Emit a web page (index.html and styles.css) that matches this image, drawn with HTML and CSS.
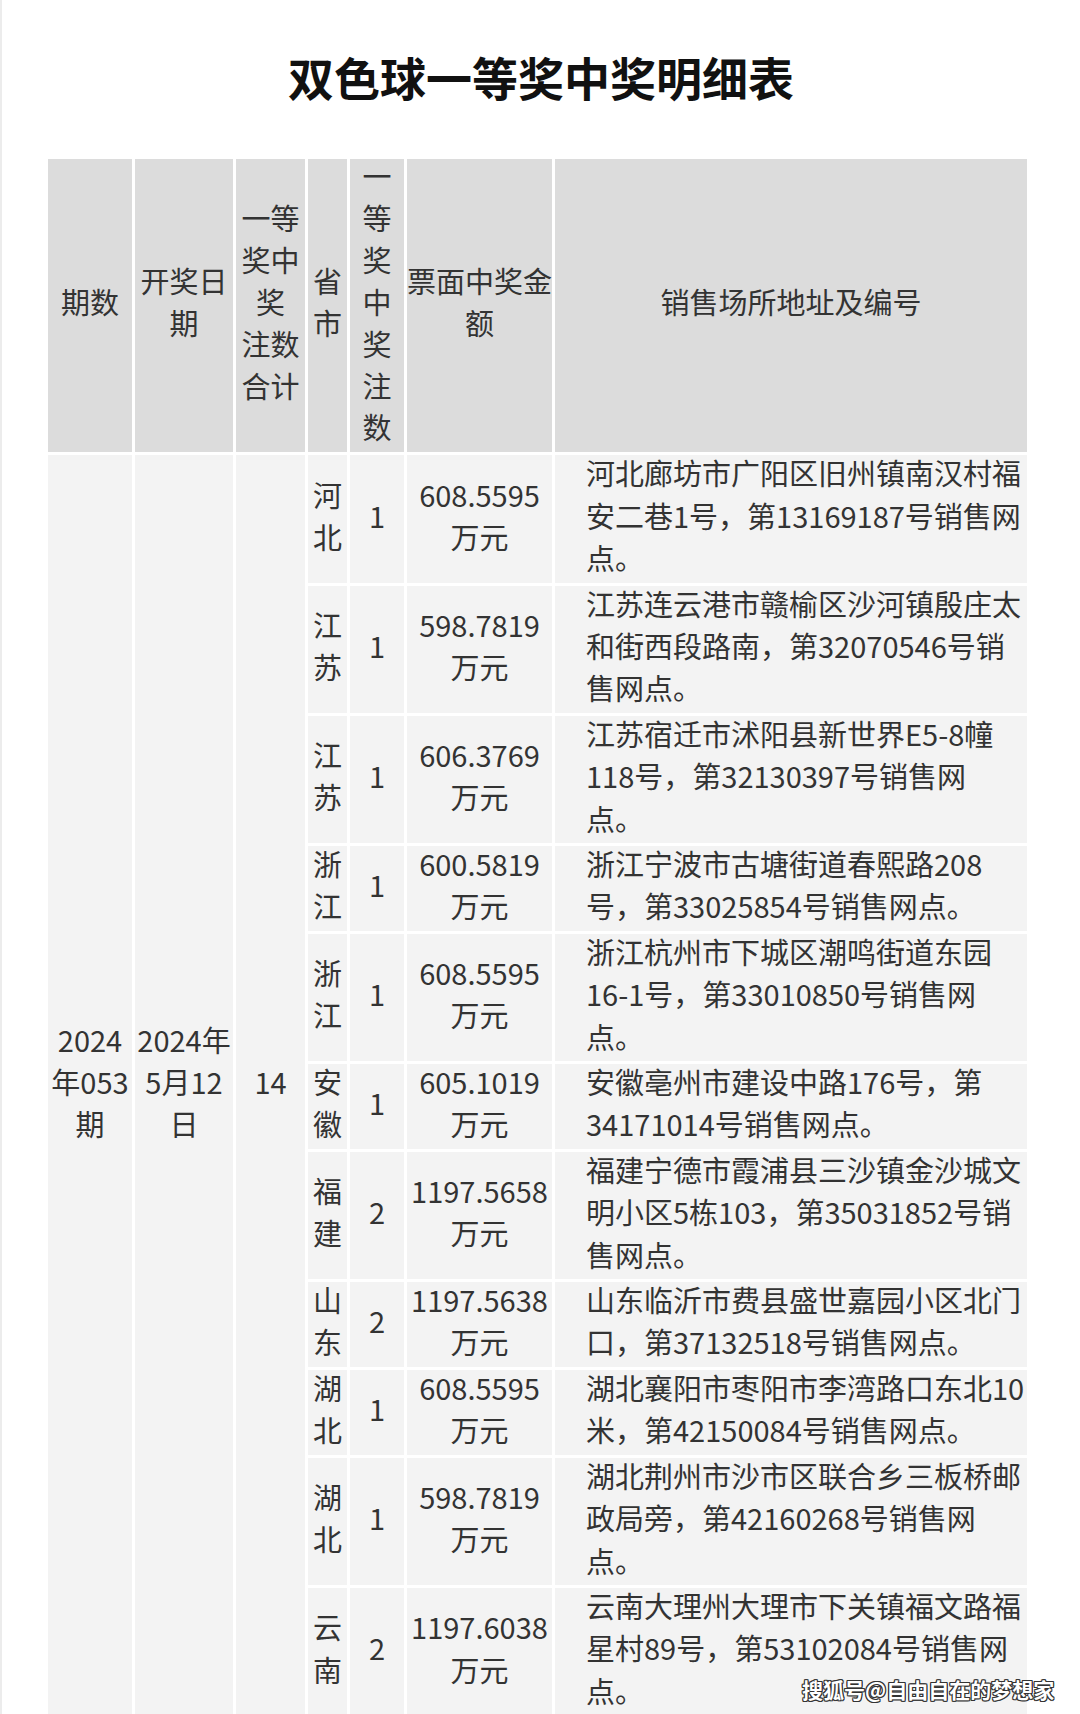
FILE: index.html
```html
<!DOCTYPE html>
<html lang="zh-CN">
<head>
<meta charset="utf-8">
<title>双色球一等奖中奖明细表</title>
<link rel="stylesheet" href="styles.css">
</head>
<body>
<div class="page">
  <h1 class="title">双色球一等奖中奖明细表</h1>
  <table class="prize">
    <colgroup>
      <col class="c1"><col class="c2"><col class="c3"><col class="c4"><col class="c5"><col class="c6"><col class="c7">
    </colgroup>
    <thead>
      <tr>
        <th><div class="t">期数</div></th>
        <th><div class="t">开奖日<br>期</div></th>
        <th><div class="t">一等<br>奖中<br>奖<br>注数<br>合计</div></th>
        <th><div class="t">省<br>市</div></th>
        <th><div class="t">一<br>等<br>奖<br>中<br>奖<br>注<br>数</div></th>
        <th><div class="t">票面中奖金<br>额</div></th>
        <th><div class="t">销售场所地址及编号</div></th>
      </tr>
    </thead>
    <tbody>
      <tr>
        <td rowspan="11"><div class="t">2024<br>年053<br>期</div></td>
        <td rowspan="11"><div class="t">2024年<br>5月12<br>日</div></td>
        <td rowspan="11"><div class="t">14</div></td>
        <td><div class="t">河<br>北</div></td><td><div class="t">1</div></td><td><div class="t">608.5595<br>万元</div></td>
        <td class="addr"><div class="t">河北廊坊市广阳区旧州镇南汉村福<br>安二巷1号，第13169187号销售网<br>点。</div></td>
      </tr>
      <tr>
        <td><div class="t">江<br>苏</div></td><td><div class="t">1</div></td><td><div class="t">598.7819<br>万元</div></td>
        <td class="addr"><div class="t">江苏连云港市赣榆区沙河镇殷庄太<br>和街西段路南，第32070546号销<br>售网点。</div></td>
      </tr>
      <tr>
        <td><div class="t">江<br>苏</div></td><td><div class="t">1</div></td><td><div class="t">606.3769<br>万元</div></td>
        <td class="addr"><div class="t">江苏宿迁市沭阳县新世界E5-8幢<br>118号，第32130397号销售网<br>点。</div></td>
      </tr>
      <tr>
        <td><div class="t">浙<br>江</div></td><td><div class="t">1</div></td><td><div class="t">600.5819<br>万元</div></td>
        <td class="addr"><div class="t">浙江宁波市古塘街道春熙路208<br>号，第33025854号销售网点。</div></td>
      </tr>
      <tr>
        <td><div class="t">浙<br>江</div></td><td><div class="t">1</div></td><td><div class="t">608.5595<br>万元</div></td>
        <td class="addr"><div class="t">浙江杭州市下城区潮鸣街道东园<br>16-1号，第33010850号销售网<br>点。</div></td>
      </tr>
      <tr>
        <td><div class="t">安<br>徽</div></td><td><div class="t">1</div></td><td><div class="t">605.1019<br>万元</div></td>
        <td class="addr"><div class="t">安徽亳州市建设中路176号，第<br>34171014号销售网点。</div></td>
      </tr>
      <tr>
        <td><div class="t">福<br>建</div></td><td><div class="t">2</div></td><td><div class="t">1197.5658<br>万元</div></td>
        <td class="addr"><div class="t">福建宁德市霞浦县三沙镇金沙城文<br>明小区5栋103，第35031852号销<br>售网点。</div></td>
      </tr>
      <tr>
        <td><div class="t">山<br>东</div></td><td><div class="t">2</div></td><td><div class="t">1197.5638<br>万元</div></td>
        <td class="addr"><div class="t">山东临沂市费县盛世嘉园小区北门<br>口，第37132518号销售网点。</div></td>
      </tr>
      <tr>
        <td><div class="t">湖<br>北</div></td><td><div class="t">1</div></td><td><div class="t">608.5595<br>万元</div></td>
        <td class="addr"><div class="t">湖北襄阳市枣阳市李湾路口东北10<br>米，第42150084号销售网点。</div></td>
      </tr>
      <tr>
        <td><div class="t">湖<br>北</div></td><td><div class="t">1</div></td><td><div class="t">598.7819<br>万元</div></td>
        <td class="addr"><div class="t">湖北荆州市沙市区联合乡三板桥邮<br>政局旁，第42160268号销售网<br>点。</div></td>
      </tr>
      <tr>
        <td><div class="t">云<br>南</div></td><td><div class="t">2</div></td><td><div class="t">1197.6038<br>万元</div></td>
        <td class="addr"><div class="t">云南大理州大理市下关镇福文路福<br>星村89号，第53102084号销售网<br>点。</div></td>
      </tr>
    </tbody>
  </table>
  <div class="watermark">搜狐号@自由自在的梦想家</div>
</div>
</body>
</html>
```

FILE: styles.css
```css
html, body {
  margin: 0;
  padding: 0;
  background: #ffffff;
}

body {
  width: 1080px;
  height: 1714px;
  overflow: hidden;
  font-family: "Noto Sans CJK SC", "Noto Sans", sans-serif;
}

.page {
  position: relative;
  width: 1080px;
  height: 1714px;
  border-left: 2px solid #ececec;
  box-sizing: border-box;
  overflow: hidden;
}

.title {
  margin: 0;
  padding-top: 46px;
  height: 60px;
  line-height: 60px;
  text-align: center;
  font-size: 46px;
  font-weight: 700;
  color: #111111;
  margin-bottom: 50px;
}

.prize {
  margin-left: 43px;
  border-collapse: separate;
  border-spacing: 3px;
  table-layout: fixed;
  width: 985px;
  font-size: 29px;
  line-height: 42.4px;
  color: #333333;
}

.c1 { width: 84px; }
.c2 { width: 98px; }
.c3 { width: 69px; }
.c4 { width: 39px; }
.c5 { width: 54px; }
.c6 { width: 145px; }
.c7 { width: 472px; }

.prize th,
.prize td {
  padding: 0;
  text-align: center;
  vertical-align: middle;
  white-space: nowrap;
  font-weight: 400;
}

.prize th {
  background: #dcdcdc;
  line-height: 41.9px;
}

.prize td {
  background: #f3f3f3;
}

.prize .t {
  margin: -4px 0 4px;
}

.prize td.addr {
  text-align: left;
  padding-left: 31px;
}

.watermark {
  position: absolute;
  left: 800px;
  top: 1675px;
  font-size: 21px;
  line-height: 28px;
  font-weight: 700;
  color: #ffffff;
  white-space: nowrap;
  text-shadow:
    1px 1px 0 #333, -1px -1px 0 #333, 1px -1px 0 #333, -1px 1px 0 #333,
    0 1px 0 #333, 0 -1px 0 #333, 1px 0 0 #333, -1px 0 0 #333;
}
```
